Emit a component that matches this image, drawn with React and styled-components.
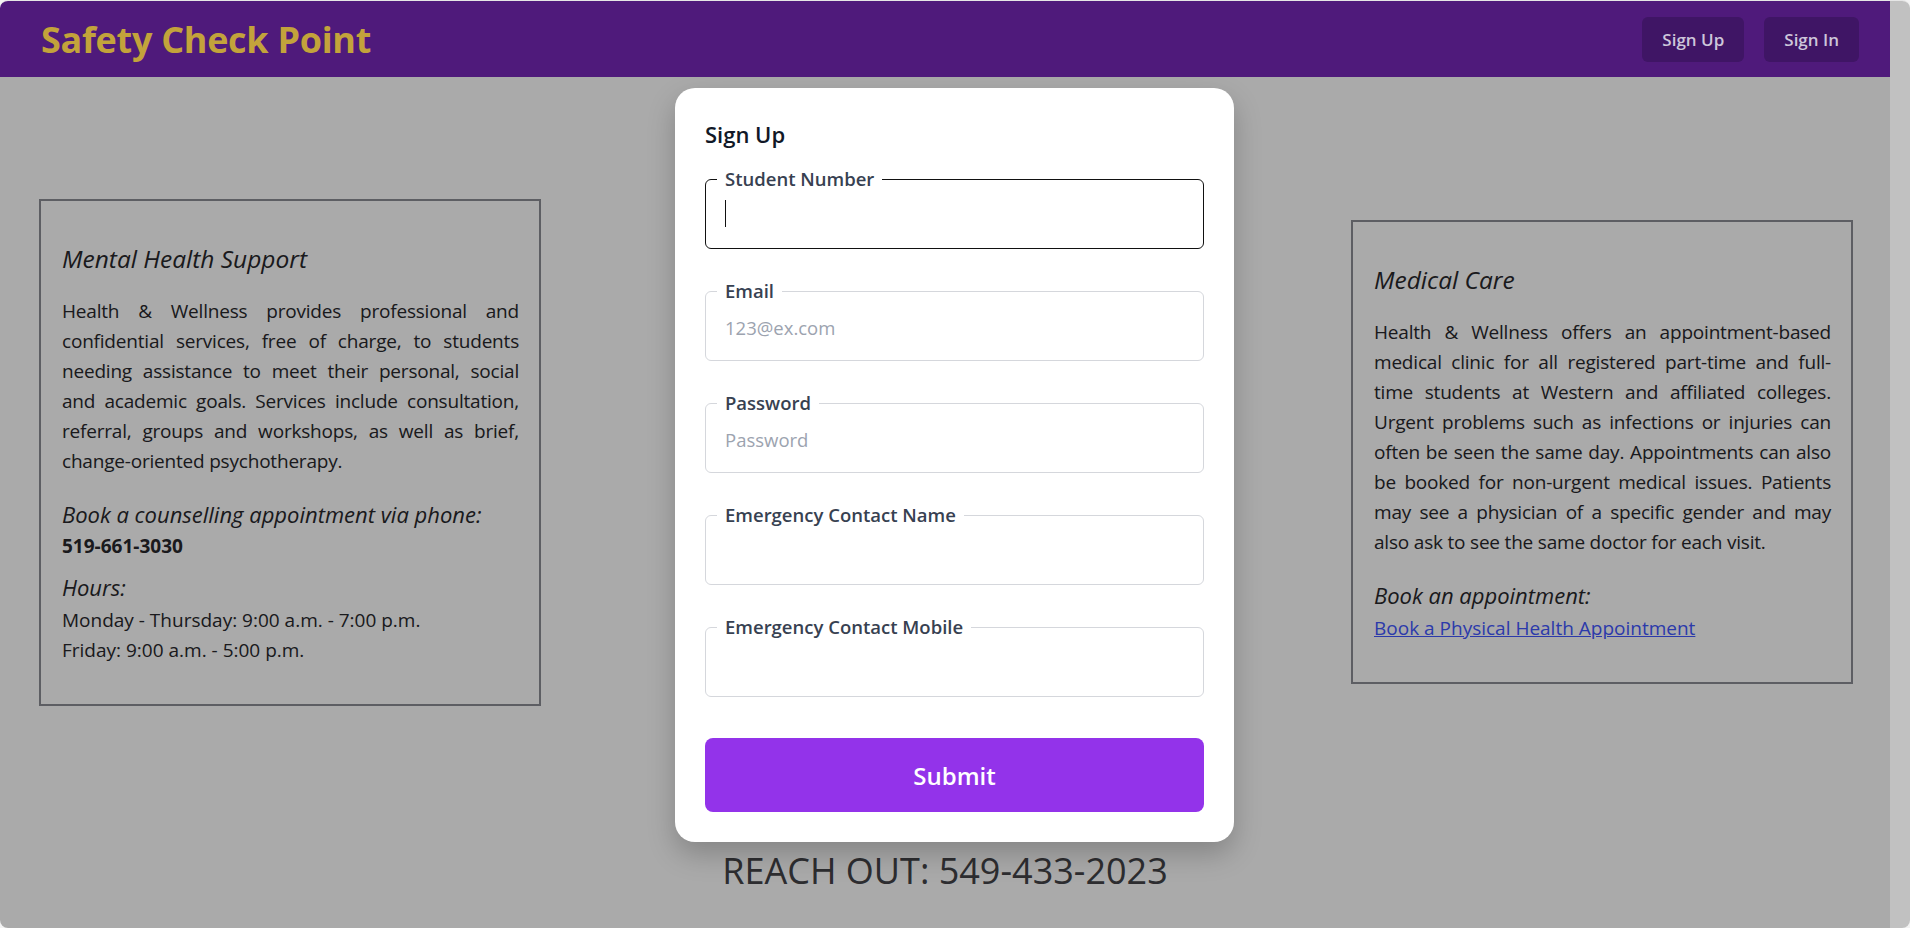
import React from 'react'
import styled, { createGlobalStyle } from 'styled-components';

const Global = createGlobalStyle`
  html, body {
    margin: 0;
    padding: 0;
    background: #f3f3f3;
    font-family: 'Open Sans', 'Noto Sans', sans-serif;
  }
  * { box-sizing: border-box; }
`;

const Frame = styled.div`
  display: flex;
  height: 928px;
  border-top: 1px solid #e6e6e6;
  border-radius: 8px;
  overflow: hidden;
`;

const Page = styled.div`
  position: relative;
  flex: 1;
  display: flex;
  flex-direction: column;
  background: #ffffff;
`;

const ScrollTrack = styled.div`
  width: 20px;
  background: #c1c1c1;
`;

const Header = styled.header`
  position: relative;
  z-index: 2;
  height: 76px;
  display: flex;
  align-items: center;
  justify-content: space-between;
  padding: 0 31px 0 41px;
  background: #4f1a7b;
`;

const Brand = styled.h1`
  margin: 0;
  font-size: 36px;
  font-weight: 700;
  color: #c3a33b;
  letter-spacing: -0.3px;
`;

const NavButtons = styled.nav`
  display: flex;
  gap: 20px;
`;

const NavButton = styled.button`
  height: 45px;
  padding: 0 20px;
  border: none;
  border-radius: 6px;
  background: #3f1565;
  color: #cdc6da;
  font-family: inherit;
  font-size: 17px;
  font-weight: 600;
`;

const Main = styled.main`
  height: 750px;
  display: flex;
  align-items: center;
  justify-content: space-between;
  padding: 0 37px 0 39px;
`;

const InfoBox = styled.section`
  width: 502px;
  border: 2px solid #8c8d95;
  padding: 42px 20px 39px 21px;
  color: #28282c;
  text-align: justify;
`;

const BoxTitle = styled.h3`
  margin: 0 0 21px;
  font-size: 24.5px;
  line-height: 32px;
  font-weight: 400;
  font-style: italic;
`;

const Para = styled.p`
  margin: 0 0 23px;
  font-size: 19px;
  line-height: 30px;
  letter-spacing: -0.2px;
`;

const SubTitle = styled.h4`
  margin: ${p => p.$mt || '0'} 0 2.5px;
  font-size: 22px;
  line-height: 30px;
  font-weight: 400;
  font-style: italic;
  text-align: left;
`;

const Line = styled.div`
  font-size: 19px;
  line-height: 30px;
  font-weight: ${p => (p.$bold ? 700 : 400)};
  text-align: left;
`;

const Link = styled.a`
  display: inline-block;
  font-size: 19px;
  line-height: 30px;
  color: #4257ff;
  text-decoration: underline;
`;

const Footer = styled.footer`
  margin-top: 20px;
  text-align: center;
  font-size: 36px;
  line-height: 48px;
  color: #444448;
`;

const Overlay = styled.div`
  position: absolute;
  z-index: 1;
  top: 76px;
  left: 0;
  right: 0;
  bottom: 0;
  display: flex;
  align-items: flex-start;
  padding: 11px 0 0 675px;
  background: rgba(0, 0, 0, 0.335);
`;

const Card = styled.div`
  width: 559px;
  flex-shrink: 0;
  padding: 31.5px 30px 30px 30px;
  background: #ffffff;
  border-radius: 20px;
  box-shadow: 0 12px 28px rgba(0, 0, 0, 0.22);
`;

const CardTitle = styled.h2`
  margin: 0 0 19.5px;
  font-size: 22px;
  line-height: 28px;
  font-weight: 600;
  color: #111827;
`;

const Form = styled.form`
  display: flex;
  flex-direction: column;
  gap: 30px;
`;

const Field = styled.fieldset`
  margin: 0;
  min-width: 0;
  padding: 0 11px;
  border: 1px solid ${p => (p.$active ? '#111111' : '#d5d7dc')};
  border-radius: 6px;
`;

const Legend = styled.legend`
  padding: 0 8px;
  font-size: 18.5px;
  line-height: 24px;
  font-weight: 600;
  color: #374151;
`;

const InputWrap = styled.div`
  position: relative;
`;

const Caret = styled.span`
  position: absolute;
  left: 8px;
  top: 9px;
  width: 1px;
  height: 27px;
  background: #111111;
`;

const Input = styled.input`
  display: block;
  width: 100%;
  padding: 12px 8px 19px;
  border: none;
  outline: none;
  background: transparent;
  font-family: inherit;
  font-size: 18.5px;
  line-height: 26px;
  color: #111827;
  &::placeholder { color: #9ca3af; }
`;

const Submit = styled.button`
  margin-top: 11px;
  height: 74px;
  border: none;
  border-radius: 8px;
  background: #9333ea;
  color: #ffffff;
  font-family: inherit;
  font-size: 24px;
  font-weight: 600;
`;

const fields = [
  { label: 'Student Number', placeholder: '', active: true },
  { label: 'Email', placeholder: '123@ex.com' },
  { label: 'Password', placeholder: 'Password', type: 'password' },
  { label: 'Emergency Contact Name', placeholder: '' },
  { label: 'Emergency Contact Mobile', placeholder: '' },
];

export default function App() {
  return (
    <>
      <Global />
      <Frame>
        <Page>
          <Header>
            <Brand>Safety Check Point</Brand>
            <NavButtons>
              <NavButton>Sign Up</NavButton>
              <NavButton>Sign In</NavButton>
            </NavButtons>
          </Header>

          <Main>
            <InfoBox>
              <BoxTitle>Mental Health Support</BoxTitle>
              <Para>
                Health &amp; Wellness provides professional and confidential services, free of charge, to
                students needing assistance to meet their personal, social and academic goals. Services
                include consultation, referral, groups and workshops, as well as brief, change-oriented
                psychotherapy.
              </Para>
              <SubTitle>Book a counselling appointment via phone:</SubTitle>
              <Line $bold>519-661-3030</Line>
              <SubTitle $mt="11px">Hours:</SubTitle>
              <Line>Monday - Thursday: 9:00 a.m. - 7:00 p.m.</Line>
              <Line>Friday: 9:00 a.m. - 5:00 p.m.</Line>
            </InfoBox>

            <InfoBox>
              <BoxTitle>Medical Care</BoxTitle>
              <Para>
                Health &amp; Wellness offers an appointment-based medical clinic for all registered
                part-time and full-time students at Western and affiliated colleges. Urgent problems such
                as infections or injuries can often be seen the same day. Appointments can also be booked
                for non-urgent medical issues. Patients may see a physician of a specific gender and may
                also ask to see the same doctor for each visit.
              </Para>
              <SubTitle>Book an appointment:</SubTitle>
              <Link href="#">Book a Physical Health Appointment</Link>
            </InfoBox>
          </Main>

          <Footer>REACH OUT: 549-433-2023</Footer>

          <Overlay>
            <Card>
              <CardTitle>Sign Up</CardTitle>
              <Form onSubmit={e => e.preventDefault()}>
                {fields.map(f => (
                  <Field key={f.label} $active={f.active}>
                    <Legend>{f.label}</Legend>
                    <InputWrap>
                      <Input type={f.type || 'text'} placeholder={f.placeholder} />
                      {f.active && <Caret />}
                    </InputWrap>
                  </Field>
                ))}
                <Submit type="submit">Submit</Submit>
              </Form>
            </Card>
          </Overlay>
        </Page>
        <ScrollTrack />
      </Frame>
    </>
  )
}
